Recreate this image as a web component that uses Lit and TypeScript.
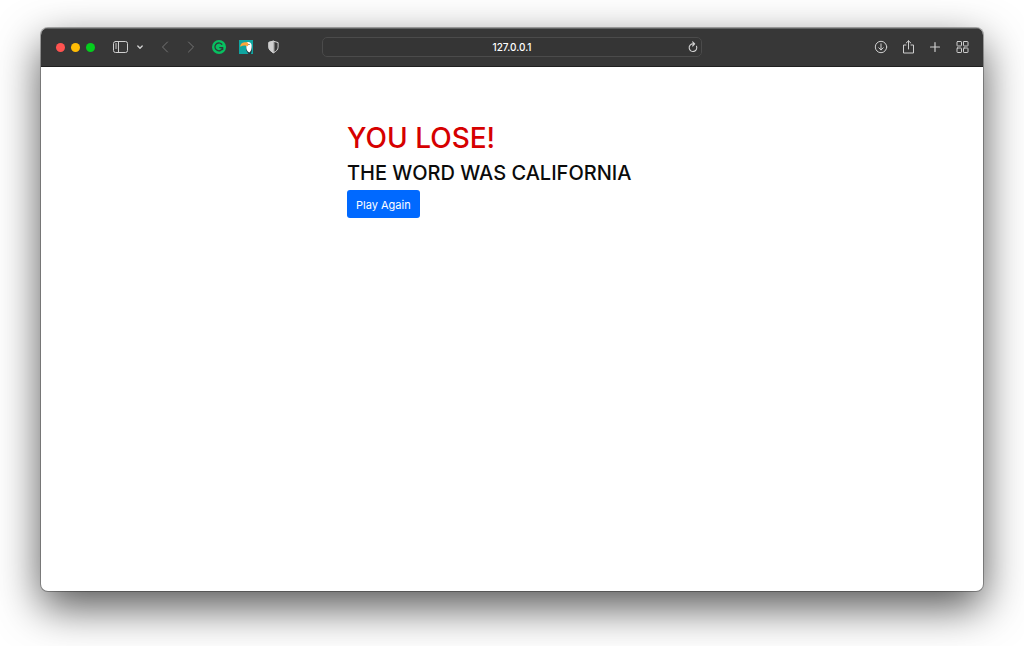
import { LitElement, html, css, svg } from "lit";
import { customElement, property, state } from "lit/decorators.js";

const line = (body: unknown, w = 14) => html`<svg
  width=${w} height="14" viewBox="0 0 ${w} 14" fill="none"
  stroke="currentColor" stroke-width="1" stroke-linecap="round" stroke-linejoin="round"
  aria-hidden="true">${body}</svg>`;

const icons = {
  sidebar: line(svg`<rect x=".5" y="1.500" width="14" height="11" rx="2"/><path d="M5.500 1.500v11M2.500 4h1.200M2.500 6h1.200M2.500 8h1.200"/>`, 16),
  chevron: line(svg`<path d="M2.800 6l2.200 2.200L7.200 6" stroke-width="1.400"/>`, 10),
  back: line(svg`<path d="M9.500 2L4.500 7l5 5"/>`),
  forward: line(svg`<path d="M4.500 2l5 5-5 5"/>`),
  grammar: line(svg`<circle cx="7" cy="7" r="7" fill="#07c160" stroke="none"/><path d="M9.800 4.300A3.900 3.900 0 1 0 10.700 7.600H7.800M10.700 7.600v2" stroke="#33383a" stroke-width="1.300"/>`),
  toucan: line(svg`<g stroke="none"><rect width="14" height="14" fill="#10a5a0"/><path d="M7 6c-.3 3 .5 6 2.500 8h2.300c1.200-2.500 1.500-6 .3-9z" fill="#20343c"/><path d="M7.500 2.500C9.500 1.500 12.300 2.400 12.600 5c.3 3-.4 6.500-2.300 7.600C8 11.500 7 9 7.300 6z" fill="#fff"/><path d="M1.300 6.800C1.300 3 4.500 1.900 8.600 2.500c1 1 1 2.700.2 3.700C6 5.200 4 5.400 1.300 6.800z" fill="#ffa53a"/><circle cx="10" cy="4.500" r=".6" fill="#26333a"/></g>`),
  shield: line(svg`<path d="M7.500 1.200L12.100 2.600v4.600c0 2.500-2 4.200-4.600 5.500-2.600-1.300-4.600-3-4.600-5.500V2.600z"/><path d="M7.500 1.200L2.900 2.600v4.600c0 2.500 2 4.200 4.600 5.500z" fill="currentColor"/>`),
  reload: line(svg`<path d="M9.500 6.300A3.800 3.800 0 1 1 6 3.900h1.500M5.600 1.800l2.100 2.100-2.100 2.100" stroke-width="1.100"/>`, 12),
  download: line(svg`<circle cx="7" cy="7" r="5.700"/><path d="M7 3.800v6M4.800 7.800L7 10l2.200-2.200"/>`),
  share: line(svg`<path d="M5 5H2.500v8h10V5H10M7.500 9V.8M5.200 3L7.500.8 9.800 3"/>`),
  plus: line(svg`<path d="M7 2.500v9M2.500 7h9" stroke-width="1.200"/>`),
  grid: line(svg`<rect x="2" y="1.500" width="4.500" height="4.500" rx=".6"/><rect x="8.500" y="1.500" width="4.500" height="4.500" rx=".6"/><rect x="2" y="8" width="4.500" height="4.500" rx=".6"/><rect x="8.500" y="8" width="4.500" height="4.500" rx=".6"/>`),
};

@customElement("browser-toolbar")
class BrowserToolbar extends LitElement {
  @property() address = "";

  static styles = css`
    :host {
      display: grid;
      grid-template-columns: 1fr minmax(120px, 380px) 1fr;
      align-items: center;
      box-sizing: border-box;
      height: 39px;
      padding: 0 14px 1px;
      background: #373737;
      border-top: 1px solid #616363;
      border-bottom: 1px solid #202020;
      color: #cfcfcf;
    }
    .group, .lights, .pane, .nav, .extensions { display: flex; align-items: center; }
    .nav { gap: 12px; margin-left: 13px; color: #747474; }
    .lights { gap: 6px; margin-left: 1px; }
    .pane { gap: 6px; margin-left: 18px; }
    .extensions { gap: 13px; margin-left: 14px; }
    .actions { gap: 13px; justify-content: flex-end; }
    button {
      display: block;
      margin: 0;
      padding: 0;
      border: 0;
      background: none;
      color: inherit;
    }
    svg { display: block; }
    .light { width: 9px; height: 9px; border-radius: 50%; }
    .close { background: #ff5350; }
    .minimise { background: #ffbc05; }
    .zoom { background: #04ce1d; }
    .address {
      display: flex;
      align-items: center;
      box-sizing: border-box;
      height: 20px;
      padding: 0 2px 0 14px;
      border: 1px solid #4b4b4b;
      border-radius: 5px;
      background: #353535;
    }
    input {
      flex: 1;
      min-width: 0;
      padding: 0;
      border: 0;
      outline: 0;
      background: none;
      color: #fff;
      font: 500 10px/14px Inter, sans-serif;
      text-align: center;
    }
  `;

  render() {
    const btn = (label: string, icon: unknown) => html`<button aria-label=${label}>${icon}</button>`;
    return html`
      <div class="group">
        <div class="lights">
          <button class="light close" aria-label="Close"></button>
          <button class="light minimise" aria-label="Minimise"></button>
          <button class="light zoom" aria-label="Zoom"></button>
        </div>
        <div class="pane">${btn("Sidebar", icons.sidebar)}${btn("Tab groups", icons.chevron)}</div>
        <div class="nav">${btn("Back", icons.back)}${btn("Forward", icons.forward)}</div>
        <div class="extensions">
          ${btn("Grammar", icons.grammar)}${btn("Toucan", icons.toucan)}${btn("Privacy", icons.shield)}
        </div>
      </div>
      <div class="address">
        <input type="text" aria-label="Address" .value=${this.address} />
        ${btn("Reload", icons.reload)}
      </div>
      <div class="group actions">
        ${btn("Downloads", icons.download)}${btn("Share", icons.share)}${btn("New tab", icons.plus)}${btn("Tab overview", icons.grid)}
      </div>
    `;
  }
}

@customElement("app-root")
class AppRoot extends LitElement {
  @state() private word = "CALIFORNIA";

  static styles = css`
    :host {
      display: flex;
      box-sizing: border-box;
      min-height: 100vh;
      padding: 28px 41px 55px;
      background: #fff;
      font-family: Inter, sans-serif;
    }
    .window {
      flex: 1;
      display: flex;
      flex-direction: column;
      overflow: hidden;
      border-radius: 7px;
      background: #fff;
      box-shadow: 0 0 0 1px rgba(0, 0, 0, 0.3), 0 16px 44px rgba(0, 0, 0, 0.68);
    }
    .result {
      box-sizing: border-box;
      width: 100%;
      max-width: 330px;
      margin: 0 auto;
      padding-top: 53px;
    }
    h1, h2 { margin: 0; font-weight: 500; }
    h1 { color: #d60000; font-size: 28px; line-height: 36px; }
    h2 { margin: 4px 0; color: #0b0b0b; font-size: 20px; line-height: 26px; white-space: nowrap; }
    .again {
      height: 28px;
      padding: 1px 9px 0;
      border: 0;
      border-radius: 3px;
      background: #0069ff;
      color: #fff;
      font: 400 11px/18px Inter, sans-serif;
    }
  `;

  render() {
    return html`
      <div class="window">
        <browser-toolbar address="127.0.0.1"></browser-toolbar>
        <main class="result">
          <h1>YOU LOSE!</h1>
          <h2>THE WORD WAS ${this.word}</h2>
          <button class="again">Play Again</button>
        </main>
      </div>
    `;
  }
}
